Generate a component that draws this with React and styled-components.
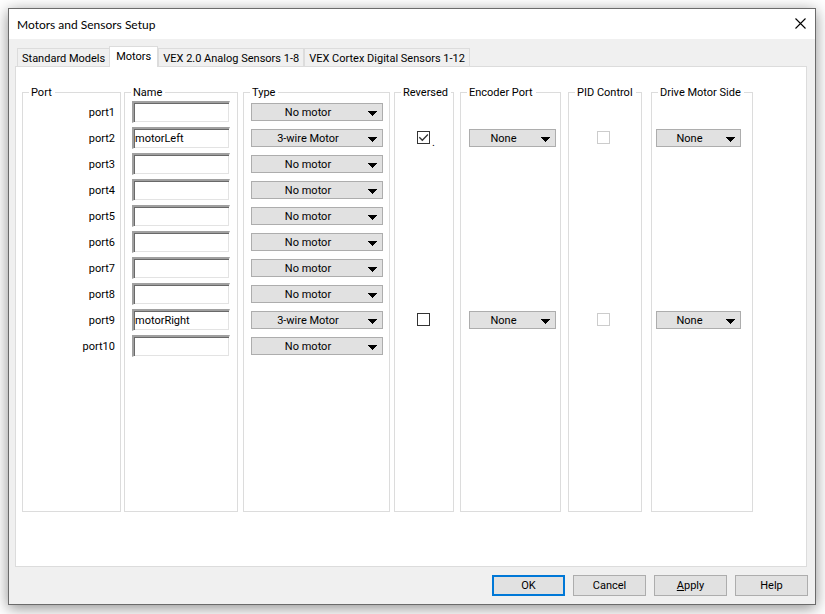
import React, { useState } from "react";
import styled, { createGlobalStyle } from "styled-components";

const GlobalStyle = createGlobalStyle`
  * {
    box-sizing: border-box;
  }
  body {
    margin: 0;
    background: #fff;
  }
  body, button, input, select {
    font-family: Roboto, "Liberation Sans", sans-serif;
    font-size: 11px;
    color: #000;
  }
`;

const Page = styled.main`
  display: flex;
  min-height: 100vh;
  padding: 8px 9px 9px 8px;
`;

const Dialog = styled.section`
  flex: 1;
  display: flex;
  flex-direction: column;
  min-width: 0;
  background: #f0f0f0;
  border: 1px solid #6b6b6b;
  box-shadow: 0 3px 14px rgba(0, 0, 0, 0.45);
`;

const TitleBar = styled.header`
  display: flex;
  align-items: center;
  justify-content: space-between;
  height: 30px;
  padding: 0 4px 0 8px;
  background: #fff;
`;

const Title = styled.h1`
  margin: 0;
  font-family: Lato, "Open Sans", sans-serif;
  font-size: 12px;
  font-weight: 400;
`;

const CloseButton = styled.button`
  display: flex;
  padding: 4px 5px 6px;
  border: 0;
  background: none;
`;

const TabList = styled.div`
  display: flex;
  align-items: flex-end;
  height: 27px;
  padding: 0 8px;
`;

const Tab = styled.button`
  height: ${props => (props.$active ? 21 : 18)}px;
  margin: ${props => (props.$active ? "0 0 -1px -1px" : "0")};
  padding: ${props => (props.$active ? "0 6px 2px" : "1px 4px 0")};
  border: 1px solid #dcdcdc;
  border-bottom: 0;
  background: ${props => (props.$active ? "#fff" : "#f0f0f0")};
  white-space: nowrap;
  z-index: ${props => (props.$active ? 1 : 0)};

  & + & {
    border-left-width: ${props => (props.$active ? 1 : 0)}px;
  }
`;

const Panel = styled.div`
  flex: 1;
  display: grid;
  grid-template-columns: 102fr 119fr 151fr 66fr 108fr 83fr 102fr;
  margin: 0 8px 0 6px;
  padding: 19px 53px 54px 6px;
  border: 1px solid #dcdcdc;
  background: #fff;
`;

const Group = styled.fieldset`
  min-width: 0;
  margin: 0 ${props => props.$gap || 0}px 0 0;
  padding: 0 ${props => props.$right || 0}px 0 ${props => props.$left || 0}px;
  border: 1px solid #dcdcdc;
`;

// pulls the caption back to the same spot whatever the group's own padding is
const Caption = styled.legend`
  margin-left: ${props => 6 - (props.$left || 0)}px;
  padding: 0 3px 0 2px;
  line-height: 13px;
  white-space: nowrap;
`;

const Row = styled.div`
  display: flex;
  align-items: center;
  justify-content: ${props => (props.$end ? "flex-end" : "flex-start")};
  height: 26px;
`;

const NameInput = styled.input`
  width: 100%;
  height: 22px;
  padding: 0 2px 0 1px;
  border: 1px solid #fff;
  border-top: 2px solid #a0a0a0;
  border-left: 2px solid #a0a0a0;
  border-radius: 0;
  outline: 0;
  background: #fff;
  box-shadow: inset 1px 1px #696969, inset -1px -1px #e3e3e3;
`;

const DropDownBox = styled.span`
  flex: 1;
  display: grid;
  min-width: 0;

  & > * {
    grid-area: 1 / 1;
  }
  & svg {
    place-self: end;
    margin: 0 6px 5px 0;
    pointer-events: none;
  }
`;

const Select = styled.select`
  appearance: none;
  width: 100%;
  height: 18px;
  padding: 0 18px 0 0;
  border: 1px solid #adadad;
  border-radius: 0;
  background: #e1e1e1;
  text-align: center;
  text-align-last: center;
`;

const CheckBox = styled.span`
  display: grid;
  margin-bottom: 1px;

  & > * {
    grid-area: 1 / 1;
  }
  & input {
    appearance: none;
    width: 13px;
    height: 13px;
    margin: 0;
    border: 1px solid #333;
    background: #fff;
  }
  & input:disabled {
    border-color: #ccc;
  }
  & svg {
    visibility: hidden;
    pointer-events: none;
  }
  & input:checked + svg {
    visibility: visible;
  }
`;

const CheckNote = styled.label`
  align-self: flex-end;
  padding: 0 2px;
  line-height: 16px;
`;

const Footer = styled.footer`
  display: flex;
  justify-content: flex-end;
  gap: 8px;
  padding: 8px 7px;
`;

const DialogButton = styled.button`
  width: 73px;
  height: 21px;
  padding: 0;
  border: ${props => (props.$primary ? "2px solid #0078d7" : "1px solid #adadad")};
  background: #e1e1e1;
`;

const tabs = [
  "Standard Models",
  "Motors",
  "VEX 2.0 Analog Sensors 1-8",
  "VEX Cortex Digital Sensors 1-12"
];

const ports = [
  { id: "port1" },
  { id: "port2", name: "motorLeft", wired: true, reversed: true, note: "." },
  { id: "port3" },
  { id: "port4" },
  { id: "port5" },
  { id: "port6" },
  { id: "port7" },
  { id: "port8" },
  { id: "port9", name: "motorRight", wired: true },
  { id: "port10" }
];

const DropDown = ({ label, value, options }) => (
  <DropDownBox>
    <Select aria-label={label} defaultValue={value}>
      {options.map(option => (
        <option key={option}>{option}</option>
      ))}
    </Select>
    <svg width="9" height="5" viewBox="0 0 9 5" shapeRendering="crispEdges">
      <path d="M0 0h9v1H8v1H7v1H6v1H5v1H4V4H3V3H2V2H1V1H0z" fill="#000" />
    </svg>
  </DropDownBox>
);

const Check = ({ id, label, checked, disabled }) => (
  <CheckBox>
    <input
      type="checkbox"
      id={id}
      aria-label={label}
      defaultChecked={checked}
      disabled={disabled}
    />
    <svg width="13" height="13" viewBox="0 0 13 13">
      <path d="M2.3 6.3l3 3 5.6-5.8" fill="none" stroke="#333" strokeWidth="1.3" />
    </svg>
  </CheckBox>
);

const Column = ({ title, gap, left, right, end, children }) => (
  <Group $gap={gap} $left={left} $right={right}>
    <Caption $left={left}>{title}</Caption>
    {ports.map(port => (
      <Row key={port.id} $end={end}>
        {children(port)}
      </Row>
    ))}
  </Group>
);

const App = () => {
  const [active, setActive] = useState("Motors");
  return (
    <Page>
      <GlobalStyle />
      <Dialog role="dialog" aria-labelledby="title">
        <TitleBar>
          <Title id="title">Motors and Sensors Setup</Title>
          <CloseButton aria-label="Close">
            <svg width="11" height="11" viewBox="0 0 11 11">
              <path d="M.5.5l10 10M10.5.5l-10 10" stroke="#000" strokeWidth="1.1" />
            </svg>
          </CloseButton>
        </TitleBar>
        <TabList role="tablist">
          {tabs.map(tab => (
            <Tab
              key={tab}
              role="tab"
              aria-selected={tab === active}
              $active={tab === active}
              onClick={() => setActive(tab)}
            >
              {tab}
            </Tab>
          ))}
        </TabList>
        <Panel role="tabpanel">
          <Column title="Port" gap={3} right={5} end>
            {port => <label htmlFor={port.id}>{port.id}</label>}
          </Column>
          <Column title="Name" gap={5} left={7} right={7}>
            {port => <NameInput id={port.id} defaultValue={port.name} />}
          </Column>
          <Column title="Type" gap={4} left={7} right={6}>
            {port => (
              <DropDown
                label={`${port.id} type`}
                value={port.wired ? "3-wire Motor" : "No motor"}
                options={["No motor", "3-wire Motor"]}
              />
            )}
          </Column>
          <Column title="Reversed" gap={6} left={22}>
            {port =>
              port.wired && (
                <>
                  <Check
                    id={`${port.id}-reversed`}
                    label={`${port.id} reversed`}
                    checked={port.reversed}
                  />
                  {port.note && (
                    <CheckNote htmlFor={`${port.id}-reversed`}>{port.note}</CheckNote>
                  )}
                </>
              )
            }
          </Column>
          <Column title="Encoder Port" gap={7} left={8} right={4}>
            {port =>
              port.wired && (
                <DropDown label={`${port.id} encoder`} value="None" options={["None"]} />
              )
            }
          </Column>
          <Column title="PID Control" gap={9} left={28}>
            {port =>
              port.wired && (
                <Check id={`${port.id}-pid`} label={`${port.id} PID control`} disabled />
              )
            }
          </Column>
          <Column title="Drive Motor Side" left={4} right={11}>
            {port =>
              port.wired && (
                <DropDown
                  label={`${port.id} drive side`}
                  value="None"
                  options={["None", "Left", "Right"]}
                />
              )
            }
          </Column>
        </Panel>
        <Footer>
          <DialogButton $primary>OK</DialogButton>
          <DialogButton>Cancel</DialogButton>
          <DialogButton>
            <u>A</u>pply
          </DialogButton>
          <DialogButton>Help</DialogButton>
        </Footer>
      </Dialog>
    </Page>
  );
};

export default App;
